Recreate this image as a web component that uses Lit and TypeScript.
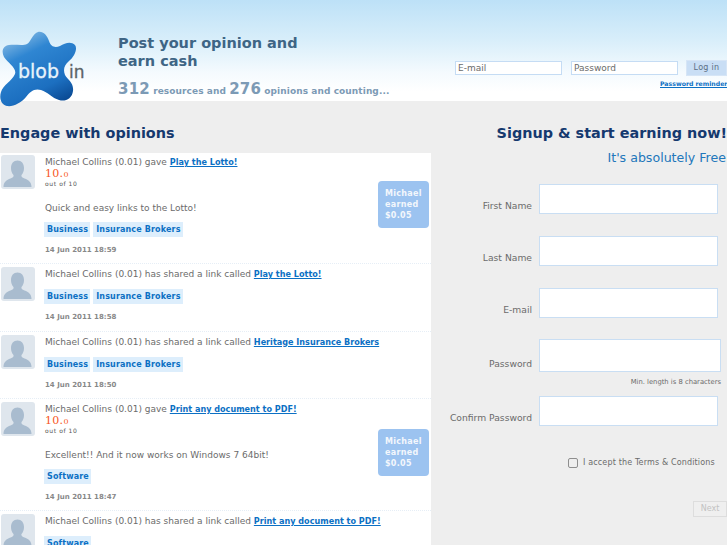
import { LitElement, html, css, svg } from "lit";
import { customElement } from "lit/decorators.js";
import { classMap } from "lit/directives/class-map.js";

type Item = { gave: boolean; link: string; comment?: string; tags: string[]; date: string; earned?: boolean };

const items: Item[] = [
  { gave: true, link: "Play the Lotto!", comment: "Quick and easy links to the Lotto!", tags: ["Business", "Insurance Brokers"], date: "14 Jun 2011 18:59", earned: true },
  { gave: false, link: "Play the Lotto!", tags: ["Business", "Insurance Brokers"], date: "14 Jun 2011 18:58" },
  { gave: false, link: "Heritage Insurance Brokers", tags: ["Business", "Insurance Brokers"], date: "14 Jun 2011 18:50" },
  { gave: true, link: "Print any document to PDF!", comment: "Excellent!! And it now works on Windows 7 64bit!", tags: ["Software"], date: "14 Jun 2011 18:47", earned: true },
  { gave: false, link: "Print any document to PDF!", tags: ["Software"], date: "14 Jun 2011 18:45" },
];

const fields = [
  { label: "First Name", cls: "f1" },
  { label: "Last Name", cls: "f2" },
  { label: "E-mail", cls: "f3" },
  { label: "Password", cls: "f4", hint: "Min. length is 8 characters" },
  { label: "Confirm Password", cls: "f5" },
];

const avatar = svg`<svg class="av" viewBox="0 0 34 34" width="34" height="34">
  <rect width="34" height="34" rx="3" fill="#dfe6ed"/>
  <path d="M2.500 32c0-5 3-7 7-8.500 2.500-1 3.500-2 3-3.500-1.500-1.500-2.500-4-2.500-7 0-4.500 2.500-7.500 6.500-7.500s6.500 3 6.500 7.500c0 3-1 5.500-2.500 7-.5 1.500.5 2.500 3 3.500 4 1.500 7 3.500 7 8.500z" fill="#a9bccf"/>
</svg>`;

@customElement("app-root")
export class AppRoot extends LitElement {
  static styles = css`
    :host { display: block; width: 727px; height: 545px; overflow: hidden; background: #eee; font-family: "DejaVu Sans", sans-serif; color: #6b6b6b; }
    a { color: #0c70c4; font-weight: bold; }
    .head { height: 101px; display: flex; background: linear-gradient(#bde1f7 0, #d8eefa 40px, #f4fafe 72px, #fff 92px); }
    .logo { width: 118px; flex: none; position: relative; }
    .logo svg { position: absolute; left: 0; top: 30px; }
    .logo span { position: absolute; font-size: 19px; line-height: 22px; }
    .b { left: 18px; top: 60px; color: #e8f3fb; -webkit-text-stroke: .3px #e8f3fb; }
    .i { left: 69px; top: 61px; color: #5b6468; -webkit-text-stroke: .3px #5b6468; font-size: 17px !important; }
    .tag { width: 337px; flex: none; padding-top: 34px; }
    .tag h1 { margin: 0; font-size: 14.5px; line-height: 18px; font-weight: bold; color: #3e6585; width: 200px; }
    .count { margin-top: 9px; font-size: 9px; font-weight: bold; line-height: 20px; color: #7c9ab5; white-space: nowrap; letter-spacing: .08px; }
    .count b { font-size: 15px; letter-spacing: .2px; }
    .login { padding-top: 60px; flex: 1; min-width: 0; }
    .lrow { display: flex; align-items: center; }
    .in { box-sizing: border-box; width: 108px; height: 14px; border: 1px solid #c5dcf4; background: #fff; font-size: 9px; line-height: 12px; padding-left: 2px; color: #6b6b6b; }
    .in.pw { margin-left: 9px; }
    .btn { box-sizing: border-box; margin-left: 8px; width: 41px; height: 16px; background: #c9def5; border: 1px solid #d6e5f6; font-size: 8px; line-height: 14px; text-align: center; color: #5b6f85; letter-spacing: .3px; flex: none; }
    .rem { font-size: 6.2px; line-height: 10px; margin-top: 3px; white-space: nowrap; padding-left: 205px; }
    .main { display: flex; }
    .left { width: 431px; flex: none; }
    h2 { margin: 0; font-size: 14.4px; font-weight: bold; color: #15396e; line-height: 20px; }
    .left h2 { padding-top: 22px; height: 30px; }
    .feed { background: #fff; height: 400px; overflow: hidden; }
    .row { display: flex; border-bottom: 1px dotted #e6eef6; padding: 2px 2px 0 1px; position: relative; }
    .row:first-child { padding-top: 1px; }
    .av { flex: none; margin: 1px 10px 0 0; }
    .body { flex: 1; font-size: 9px; line-height: 14px; padding-top: 1px; white-space: nowrap; }
    .body a { font-size: 8.1px; }
    .score { font-family: "DejaVu Serif", serif; color: #f8581f; font-size: 11px; line-height: 12px; height: 11px; margin-top: -1px; letter-spacing: .3px; }
    .score small { font-size: 8px; }
    .out { font-size: 6px; line-height: 9px; color: #555; letter-spacing: .6px; height: 12px; }
    .cm { line-height: 14px; margin-top: 10px; }
    .tags { display: flex; gap: 3px; margin: 7px 0 0 -1px; }
    .plain .tags { margin-top: 8px; }
    .tags span { background: #ddeefc; color: #0c70c4; font-size: 8px; font-weight: bold; line-height: 15px; padding: 0 2px 0 3px; letter-spacing: .15px; }
    .date { font-size: 7px; font-weight: bold; color: #888; line-height: 10px; margin: 8px 0 8px; }
    .plain .date { margin-bottom: 8.5px; }
    .earn { position: absolute; left: 378px; top: 28px; box-sizing: border-box; width: 51px; height: 47px; padding: 7px 0 0 7px; border-radius: 4px; background: #9cc3f0; color: #f3f7fc; font-size: 8px; font-weight: bold; line-height: 11px; letter-spacing: .3px; }
    .row + .row .earn { top: 30px; }
    .right { flex: 1; min-width: 0; position: relative; }
    .right h2 { text-align: right; padding-top: 22px; }
    .free { text-align: right; font-size: 12.6px; line-height: 18px; color: #2277bb; margin-top: 6px; padding-right: 1px; }
    .form { margin-top: 17px; }
    .f { display: flex; align-items: flex-end; height: 52px; }
    .f label { width: 101px; flex: none; text-align: right; font-size: 9.200px; line-height: 12px; color: #6b6b6b; padding-bottom: 2px; white-space: nowrap; }
    .box { box-sizing: border-box; margin-left: 7px; width: 179px; height: 30px; background: #fff; border: 1px solid #c9def3; flex: none; }
    .f1, .f2, .f3 { height: 30px; margin-bottom: 22px; }
    .f4 { height: 33px; margin-top: -1px; }
    .f4 .box { width: 182px; height: 33px; }
    .hint { font-size: 6.800px; line-height: 10px; text-align: right; margin-top: 5px; padding-right: 6px; color: #6b6b6b; }
    .f5 { height: 30px; margin-top: 9px; }
    .chk { display: flex; align-items: center; margin: 31px 0 0 137px; font-size: 8px; line-height: 12px; letter-spacing: .15px; }
    .chk i { box-sizing: border-box; width: 10px; height: 10px; margin-right: 5px; background: #eee; border: 1px solid #8e8e8e; border-radius: 2px; }
    .next { box-sizing: border-box; width: 34px; height: 16px; margin: 32px 0 0 262px; border: 1px solid #ddd; background: #efefef; color: #c2c2c2; font-size: 8px; line-height: 14px; text-align: center; }
  `;

  render() {
    return html`
      <div class="head">
        <div class="logo">
          <svg width="90" height="78" viewBox="0 30 90 78">
            <defs>
              <linearGradient id="g" x1="0.2" y1="0" x2="0.7" y2="1">
                <stop offset="0" stop-color="#8fc0e6"/><stop offset=".3" stop-color="#2f86d2"/><stop offset=".75" stop-color="#1c6fc0"/><stop offset="1" stop-color="#0a4a94"/>
              </linearGradient>
            </defs>
            <path d="M38 32C43 31 47 35 49 41C51 47 55 48 60 46C65 43 71 41 75 45C78 49 74 57 69 61C64 65 63 70 65 75C68 80 74 83 73 91C72 99 65 102 59 100C52 98 48 92 41 90C34 88 30 92 26 97C21 103 13 107 7 106C1 105 -1 98 1 92C3 85 12 81 15 74C17 68 8 63 4 57C1 51 3 46 9 45C15 44 23 46 27 44C31 42 32 34 38 32Z" fill="url(#g)"/>
          </svg>
          <span class="b">blob</span><span class="i">in</span>
        </div>
        <div class="tag">
          <h1>Post your opinion and earn cash</h1>
          <div class="count"><b>312</b> resources and <b>276</b> opinions and counting...</div>
        </div>
        <div class="login">
          <div class="lrow">
            <div class="in">E-mail</div><div class="in pw">Password</div><div class="btn">Log in</div>
          </div>
          <div class="rem"><a href="#">Password reminder</a></div>
        </div>
      </div>
      <div class="main">
        <div class="left">
          <h2>Engage with opinions</h2>
          <div class="feed">
            ${items.map((it) => html`
              <div class=${classMap({ row: true, gave: it.gave, plain: !it.gave })}>
                ${avatar}
                <div class="body">
                  Michael Collins (0.01) ${it.gave ? "gave" : "has shared a link called"} <a href="#">${it.link}</a>
                  ${it.gave ? html`<div class="score">10.<small>0</small></div><div class="out">out of 10</div><div class="cm">${it.comment}</div>` : ""}
                  <div class="tags">${it.tags.map((t) => html`<span>${t}</span>`)}</div>
                  <div class="date">${it.date}</div>
                </div>
                ${it.earned ? html`<div class="earn">Michael<br />earned<br />$0.05</div>` : ""}
              </div>
            `)}
          </div>
        </div>
        <div class="right">
          <h2>Signup &amp; start earning now!</h2>
          <div class="free">It's absolutely Free</div>
          <div class="form">
            ${fields.map((f) => html`
              <div class="f ${f.cls}"><label>${f.label}</label><div class="box"></div></div>
              ${f.hint ? html`<div class="hint">${f.hint}</div>` : ""}
            `)}
            <div class="chk"><i></i>I accept the Terms &amp; Conditions</div>
            <div class="next">Next</div>
          </div>
        </div>
      </div>
    `;
  }
}
